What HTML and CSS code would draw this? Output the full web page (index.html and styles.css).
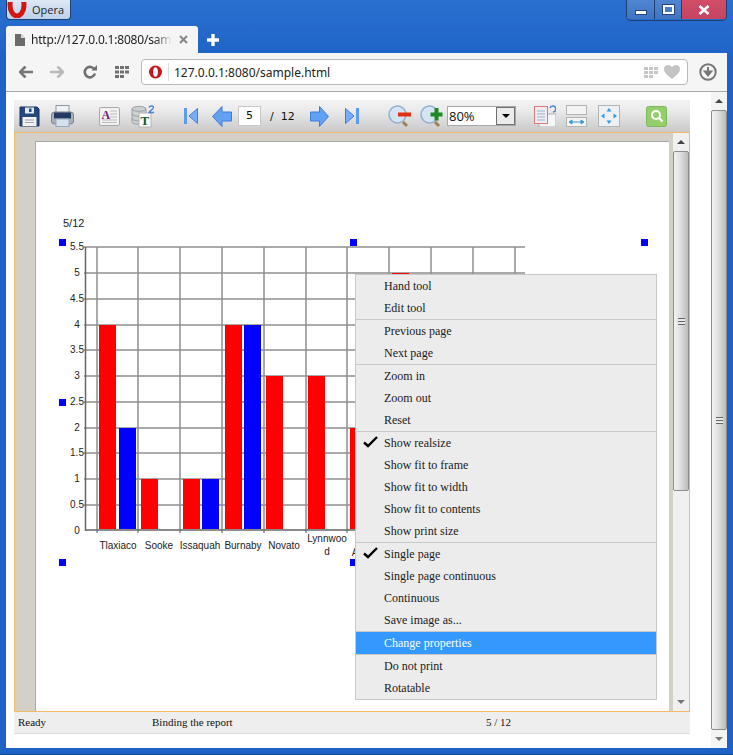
FILE: index.html
```html
<!DOCTYPE html>
<html lang="en">
<head>
	<meta charset="UTF-8">
	<title>Opera</title>
	<link rel="stylesheet" href="styles.css">
</head>
<body>
<div class="window">
	<!-- title bar -->
	<div class="titlebar">
		<div class="opera_btn">
			<svg class="opera_logo" width="20" height="16" viewBox="0 0 20 16"><ellipse cx="10" cy="3" rx="7" ry="11" fill="none" stroke="#d3170f" stroke-width="5"/></svg>
			<span>Opera</span>
		</div>
		<div class="win_controls">
			<div class="win_btn win_min"><i></i></div>
			<div class="win_btn win_max"><i></i></div>
			<div class="win_btn win_close">
				<svg width="12" height="10" viewBox="0 0 12 10"><path d="M1.5 1 L10.5 9 M10.5 1 L1.5 9" stroke="#fff" stroke-width="2.6"/></svg>
			</div>
		</div>
	</div>

	<!-- tabs -->
	<div class="tabstrip">
		<div class="tab">
			<svg width="10" height="12" viewBox="0 0 10 12"><path d="M0 0 H6 L10 4 V12 H0 Z" fill="#6b6b6b"/><path d="M6 0 V4 H10" fill="#ddd"/></svg>
			<span class="tab_title">http://127.0.0.1:8080/samp</span>
			<svg class="tab_close" width="9" height="9" viewBox="0 0 9 9"><path d="M1 1 L8 8 M8 1 L1 8" stroke="#8a8a8a" stroke-width="2.2"/></svg>
		</div>
		<svg class="new_tab" width="12" height="12" viewBox="0 0 12 12"><path d="M6 0 V12 M0 6 H12" stroke="#fff" stroke-width="3.4"/></svg>
	</div>

	<!-- browser toolbar -->
	<div class="navbar">
		<svg class="nav_back" width="14" height="12" viewBox="0 0 14 12"><path d="M6.5 0.5 L1 6 L6.5 11.5 M1 6 H14" fill="none" stroke="#767676" stroke-width="2.6"/></svg>
		<svg class="nav_fwd" width="14" height="12" viewBox="0 0 14 12"><path d="M7.5 0.5 L13 6 L7.5 11.5 M13 6 H0" fill="none" stroke="#b9b9b9" stroke-width="2.6"/></svg>
		<svg class="nav_reload" width="14" height="14" viewBox="0 0 14 14"><path d="M11.5 4.5 A5.2 5.2 0 1 0 12 8.5" fill="none" stroke="#707070" stroke-width="2.6"/><path d="M8.5 5.5 H14 V0 Z" fill="#707070"/></svg>
		<svg class="nav_grid" width="14" height="12" viewBox="0 0 14 12" fill="#707070"><path d="M0 0h4v3H0zM5 0h4v3H5zM10 0h4v3h-4zM0 4.500h4v3H0zM5 4.500h4v3H5zM10 4.500h4v3h-4zM0 9h4v3H0zM5 9h4v3H5z"/></svg>
		<div class="address">
			<svg class="addr_logo" width="13" height="14" viewBox="0 0 13 14"><circle cx="6.500" cy="7" r="6.500" fill="#c8141a"/><ellipse cx="6.500" cy="7" rx="2.400" ry="4.800" fill="#fff"/></svg>
			<span class="addr_sep"></span>
			<span class="addr_text">127.0.0.1:8080/sample.html</span>
			<svg class="addr_grid" width="14" height="11" viewBox="0 0 14 11" fill="#c6c6c6"><path d="M0 0h4v3H0zM5 0h4v3H5zM10 0h4v3h-4zM0 4h4v3H0zM5 4h4v3H5zM10 4h4v3h-4zM0 8h4v3H0zM5 8h4v3H5z"/></svg>
			<svg class="addr_heart" width="16" height="14" viewBox="0 0 16 14"><path d="M8 14 C3 10 0 7.500 0 4 C0 1.500 2 0 4 0 C6 0 7.300 1 8 2.300 C8.700 1 10 0 12 0 C14 0 16 1.500 16 4 C16 7.500 13 10 8 14 Z" fill="#c4c4c4"/></svg>
		</div>
		<svg class="nav_download" width="18" height="18" viewBox="0 0 18 18"><circle cx="9" cy="9" r="7.700" fill="none" stroke="#777" stroke-width="2"/><path d="M9 4 V11 M5.800 8.500 L9 12.500 L12.200 8.500 Z" fill="#777" stroke="#777" stroke-width="2"/></svg>
	</div>

	<div class="content">
		<div class="main">
			<div class="viewer">
				<!-- report viewer toolbar -->
				<div class="toolbar">
					<svg class="ic_save" width="21" height="21" viewBox="0 0 21 21"><path d="M1 1 H18 L20 3 V20 H1 Z" fill="#24477c" stroke="#16305a"/><rect x="6" y="1.500" width="9" height="6" fill="#dfe8f3"/><rect x="10" y="2.500" width="2.500" height="3.500" fill="#24477c"/><rect x="3.500" y="11" width="14" height="9" fill="#f2f2f2"/><path d="M6 14 H15 M6 16.500 H15" stroke="#9aa3ad"/></svg>
					<svg class="ic_print" width="23" height="22" viewBox="0 0 23 22"><rect x="5" y="0.500" width="13" height="8" fill="#eef2f6" stroke="#8e98a4"/><rect x="0.500" y="7" width="22" height="12" rx="3" fill="#aab0b8" stroke="#7c838c"/><rect x="3" y="7.500" width="17" height="6" fill="#243a63"/><rect x="5" y="14" width="13" height="7.500" fill="#d4e2f0" stroke="#96a8ba"/></svg>
					<svg class="ic_text" width="21" height="19" viewBox="0 0 21 19"><rect x="0.500" y="0.500" width="20" height="18" rx="1.500" fill="#f4f2f0" stroke="#a8a8a8"/><path d="M11 4 H18 M11 7 H18 M11 10 H18 M3 13 H18 M3 15.500 H18" stroke="#bcbcbc"/><text class="ic_letter ic_letter_a" x="2.500" y="11.500">A</text></svg>
					<svg class="ic_db" width="24" height="23" viewBox="0 0 24 23"><path d="M1 4 C1 0.500 15 0.500 15 4 V17 C15 20 1 20 1 17 Z" fill="#ccd0d2" stroke="#9aa0a4"/><path d="M1 4 C1 7 15 7 15 4 M1 9 C1 12 15 12 15 9 M1 13.500 C1 16.500 15 16.500 15 13.500" fill="none" stroke="#9aa0a4"/><rect x="8" y="8" width="12" height="14" fill="#fbfbfb" stroke="#b4b4b4"/><text class="ic_letter ic_letter_t" x="9.500" y="19.500">T</text><path d="M18 2.500 C18.500 0.500 22.500 0.500 22.500 2.500 C22.500 4.500 18.500 5.500 18 7.500 H23" fill="none" stroke="#4a86d8" stroke-width="1.300"/></svg>
					<svg class="ic_first" width="14" height="16" viewBox="0 0 14 16"><rect x="0" y="0" width="3" height="16" fill="#5b9bf0"/><path d="M13.500 0.500 V15.500 L5 8 Z" fill="#78aef5" stroke="#3b7ddc"/></svg>
					<svg class="ic_prev" width="20" height="21" viewBox="0 0 20 21"><path d="M10 0.500 L0.500 10.500 L10 20.500 V15 H19.500 V6 H10 Z" fill="#62a0f2" stroke="#3b7ddc"/></svg>
					<div class="page_input">5</div>
					<span class="page_total"><span class="slash">/</span>12</span>
					<svg class="ic_next" width="19" height="21" viewBox="0 0 19 21"><path d="M9.500 0.500 L18.500 10.500 L9.500 20.500 V15 H0.500 V6 H9.500 Z" fill="#62a0f2" stroke="#3b7ddc"/></svg>
					<svg class="ic_last" width="14" height="16" viewBox="0 0 14 16"><rect x="11" y="0" width="3" height="16" fill="#5b9bf0"/><path d="M0.500 0.500 V15.500 L9 8 Z" fill="#78aef5" stroke="#3b7ddc"/></svg>
					<svg class="ic_zoomout" width="24" height="23" viewBox="0 0 24 23"><circle cx="9.500" cy="9.500" r="8.500" fill="#d4e4f2" stroke="#8fb0cc" stroke-width="1.500"/><path d="M15 17 L19 21" stroke="#a08050" stroke-width="3"/><rect x="10" y="7.500" width="13" height="4" fill="#e0300f"/></svg>
					<svg class="ic_zoomin" width="23" height="23" viewBox="0 0 23 23"><circle cx="9.500" cy="9.500" r="8.500" fill="#d4e4f2" stroke="#8fb0cc" stroke-width="1.500"/><path d="M15 17 L19 21" stroke="#a08050" stroke-width="3"/><path d="M16.500 3 V15.500 M10.500 9.500 H22.500" stroke="#1f8a25" stroke-width="4"/></svg>
					<div class="zoom_select"><span class="zoom_value">80%</span><span class="zoom_arrow"><i></i></span></div>
					<svg class="ic_copy" width="22" height="22" viewBox="0 0 22 22"><rect x="5" y="9" width="17" height="13" fill="#f6f6f6" stroke="#b0b0b0"/><path d="M16 3 A3 3 0 1 1 19 7" fill="none" stroke="#4a86d8" stroke-width="1.500"/><rect x="0.500" y="1.500" width="13" height="17" fill="#f4ecec" stroke="#d97a80"/><path d="M3 6 H11 M3 9 H11 M3 12 H11 M3 15 H11" stroke="#8fb6dc"/></svg>
					<svg class="ic_width" width="21" height="22" viewBox="0 0 21 22"><rect x="0.500" y="0.500" width="20" height="9" fill="#f4f4f4" stroke="#b4b4b4"/><rect x="0.500" y="12.500" width="20" height="9" fill="#f4f4f4" stroke="#b4b4b4"/><path d="M3 17 H18 M3 17 L6 15 V19 Z M18 17 L15 15 V19 Z" fill="#3a9bdc" stroke="#3a9bdc"/></svg>
					<svg class="ic_fit" width="22" height="22" viewBox="0 0 22 22"><rect x="0.500" y="0.500" width="21" height="21" fill="#eef1f3" stroke="#b4b4b4"/><path d="M11 3 L8.500 6.500 H13.500 Z M11 19 L8.500 15.500 H13.500 Z M3 11 L6.500 8.500 V13.500 Z M19 11 L15.500 8.500 V13.500 Z" fill="#2f9be0"/></svg>
					<svg class="ic_search" width="21" height="21" viewBox="0 0 21 21"><rect x="0.500" y="0.500" width="20" height="20" rx="2" fill="#94cf6c" stroke="#7cb858"/><circle cx="10" cy="9" r="4" fill="none" stroke="#fff" stroke-width="2"/><path d="M13 12 L16.500 15.500" stroke="#fff" stroke-width="2.400"/></svg>
				</div>

				<div class="canvas">
					<div class="pane">
						<div class="page">
							<svg class="chart" width="633" height="569" viewBox="36 142 633 569">
								<text class="page_no" x="63" y="227">5/12</text>
								<g class="handles">
									<rect x="59" y="239" width="7" height="7"/><rect x="350" y="239" width="7" height="7"/><rect x="641" y="239" width="7" height="7"/>
									<rect x="59" y="399" width="7" height="7"/><rect x="59" y="559" width="7" height="7"/><rect x="350" y="559" width="7" height="7"/>
								</g>
								<g class="grid">
									<path d="M84 247H525M84 273H525M84 299H525M84 325H525M84 350H525M84 376H525M84 402H525M84 428H525M84 453H525M84 479H525M84 505H525"/>
									<path d="M97 247V533M138 247V533M180 247V533M222 247V533M264 247V533M306 247V533M347 247V533M389 247V533M431 247V533M473 247V533M515 247V533"/>
								</g>
								<path class="axis" d="M85.500 247V531M85 530H525"/>
								<g class="bars_red">
									<rect x="99" y="325" width="17" height="204"/><rect x="141" y="479" width="17" height="50"/><rect x="183" y="479" width="17" height="50"/>
									<rect x="225" y="325" width="17" height="204"/><rect x="266" y="376" width="17" height="153"/><rect x="308" y="376" width="17" height="153"/>
									<rect x="350" y="428" width="17" height="101"/><rect x="392" y="273" width="17" height="256"/>
								</g>
								<g class="bars_blue">
									<rect x="119" y="428" width="17" height="101"/><rect x="202" y="479" width="17" height="50"/><rect x="244" y="325" width="17" height="204"/>
								</g>
								<g class="y_labels">
									<text x="77" y="250">5.5</text><text x="77" y="276">5</text><text x="77" y="302">4.5</text><text x="77" y="328">4</text>
									<text x="77" y="353">3.5</text><text x="77" y="379">3</text><text x="77" y="405">2.5</text><text x="77" y="431">2</text>
									<text x="77" y="456">1.5</text><text x="77" y="482">1</text><text x="77" y="508">0.5</text><text x="77" y="534">0</text>
								</g>
								<g class="x_labels">
									<text x="118" y="549">Tlaxiaco</text><text x="159" y="549">Sooke</text><text x="200" y="549">Issaquah</text>
									<text x="243" y="549">Burnaby</text><text x="284" y="549">Novato</text>
									<text x="327" y="542">Lynnwoo</text><text x="327" y="555">d</text><text x="355" y="556">A</text>
								</g>
							</svg>
						</div>
					</div>
					<div class="scrollbar inner_sb">
						<div class="sb_arrow sb_up"></div>
						<div class="sb_thumb inner_thumb"><div class="sb_grip"></div></div>
						<div class="sb_space"></div>
						<div class="sb_arrow sb_down"></div>
					</div>

					<!-- context menu -->
					<div class="menu">
						<div class="menu_group">
							<div class="menu_item">Hand tool</div>
							<div class="menu_item">Edit tool</div>
						</div>
						<div class="menu_group">
							<div class="menu_item">Previous page</div>
							<div class="menu_item">Next page</div>
						</div>
						<div class="menu_group">
							<div class="menu_item">Zoom in</div>
							<div class="menu_item">Zoom out</div>
							<div class="menu_item">Reset</div>
						</div>
						<div class="menu_group">
							<div class="menu_item"><svg class="check" width="15" height="12" viewBox="0 0 15 12"><path d="M1 6.500 L5 10 L14 1" fill="none" stroke="#000" stroke-width="2.400"/></svg>Show realsize</div>
							<div class="menu_item">Show fit to frame</div>
							<div class="menu_item">Show fit to width</div>
							<div class="menu_item">Show fit to contents</div>
							<div class="menu_item">Show print size</div>
						</div>
						<div class="menu_group">
							<div class="menu_item"><svg class="check" width="15" height="12" viewBox="0 0 15 12"><path d="M1 6.500 L5 10 L14 1" fill="none" stroke="#000" stroke-width="2.400"/></svg>Single page</div>
							<div class="menu_item">Single page continuous</div>
							<div class="menu_item">Continuous</div>
							<div class="menu_item">Save image as...</div>
						</div>
						<div class="menu_group">
							<div class="menu_item menu_active">Change properties</div>
						</div>
						<div class="menu_group">
							<div class="menu_item">Do not print</div>
							<div class="menu_item">Rotatable</div>
						</div>
					</div>
				</div>

				<div class="statusbar">
					<span class="status_a">Ready</span>
					<span class="status_b">Binding the report</span>
					<span class="status_c">5 / 12</span>
				</div>
			</div>
		</div>
		<div class="scrollbar outer_sb">
			<div class="sb_arrow sb_up"></div>
			<div class="sb_thumb outer_thumb"><div class="sb_grip"></div></div>
			<div class="sb_arrow sb_down"></div>
		</div>
	</div>
</div>
</body>
</html>
```

FILE: styles.css
```css
html, body {
	margin: 0;
	padding: 0;
}
body {
	width: 733px;
	height: 755px;
	overflow: hidden;
	background: #1f62c4;
}
.window {
	height: 755px;
	box-sizing: border-box;
	padding: 0 6px 6px;
	display: flex;
	flex-direction: column;
	background: linear-gradient(#2a70d0, #1e62c6 60px);
	border-bottom: 1px solid #1b4a8c;
	font-family: "Noto Sans", sans-serif;
}
.titlebar {
	height: 26px;
	flex: none;
	display: flex;
	justify-content: space-between;
	align-items: flex-start;
}
.opera_btn {
	width: 65px;
	height: 20px;
	box-sizing: border-box;
	display: flex;
	align-items: center;
	gap: 5px;
	background: linear-gradient(#dfe8f5, #bcd0ea);
	border: 1px solid #1d3f72;
	border-top: none;
	border-radius: 0 0 4px 4px;
	font-family: "Open Sans", sans-serif;
	font-size: 11px;
	color: #222;
}
.win_controls {
	display: flex;
	height: 20px;
	margin-right: 0;
	border: 1px solid #1d3f72;
	border-top: none;
	border-radius: 0 0 5px 5px;
	overflow: hidden;
}
.win_btn {
	display: flex;
	align-items: center;
	justify-content: center;
	box-sizing: border-box;
	height: 19px;
	background: linear-gradient(#4f86d2, #3f74c2);
	border-right: 1px solid #1d3f72;
}
.win_min {
	width: 28px;
}
.win_min i {
	width: 10px;
	height: 3px;
	margin-top: 6px;
	background: #fff;
	border: 1px solid #24477c;
}
.win_max {
	width: 27px;
}
.win_max i {
	width: 7px;
	height: 5px;
	border: 2px solid #fff;
	outline: 1px solid #24477c;
}
.win_close {
	width: 44px;
	background: linear-gradient(#d24d68, #c44460);
	border-right: none;
}
.tabstrip {
	height: 27px;
	flex: none;
	display: flex;
	align-items: flex-end;
}
.tab {
	width: 192px;
	height: 27px;
	box-sizing: border-box;
	padding-left: 9px;
	display: flex;
	align-items: center;
	background: #f5f5f5;
	border-radius: 3px 3px 0 0;
	font-size: 12px;
	color: #222;
}
.tab_title {
	width: 141px;
	margin-left: 6px;
	letter-spacing: -0.2px;
	white-space: nowrap;
	mask-image: linear-gradient(to right, #000 88%, transparent);
}
.tab_close {
	margin-left: 7px;
}
.new_tab {
	margin: 0 0 7px 9px;
}
.navbar {
	height: 38px;
	flex: none;
	display: flex;
	align-items: center;
	background: #f5f5f5;
	border-bottom: 1px solid #a8a8a8;
	box-sizing: content-box;
}
.nav_back {
	margin-left: 13px;
}
.nav_fwd {
	margin-left: 17px;
}
.nav_reload {
	margin-left: 19px;
}
.nav_grid {
	margin-left: 18px;
}
.address {
	width: 547px;
	height: 26px;
	margin-left: 12px;
	box-sizing: border-box;
	display: flex;
	align-items: center;
	background: #fff;
	border: 1px solid #b8b8b8;
	border-radius: 4px;
	font-size: 12px;
	color: #222;
}
.addr_logo {
	margin-left: 7px;
}
.addr_sep {
	width: 1px;
	height: 18px;
	margin-left: 6px;
	background: #ddd;
}
.addr_text {
	width: 470px;
	margin-left: 5px;
}
.addr_grid {
	margin-left: 0;
}
.addr_heart {
	margin-left: 6px;
}
.nav_download {
	margin-left: 11px;
}
.content {
	flex: 1;
	display: flex;
	background: #fff;
}
.main {
	flex: 1;
	padding: 8px 0 0 8px;
}
.viewer {
	width: 676px;
}
.toolbar {
	height: 32px;
	display: flex;
	align-items: center;
	background: linear-gradient(#f2f2f2, #ececec 30%, #c9c9c9);
}
.toolbar svg {
	flex: none;
}
.ic_save { margin-left: 5px; }
.ic_print { margin-left: 11px; }
.ic_text { margin-left: 25px; }
.ic_db { margin-left: 11px; }
.ic_first { margin-left: 29px; }
.ic_prev { margin-left: 14px; }
.ic_next { margin-left: 14px; }
.ic_last { margin-left: 16px; }
.ic_zoomout { margin-left: 29px; }
.ic_zoomin { margin-left: 8px; }
.ic_copy { margin-left: 18px; }
.ic_width { margin-left: 10px; }
.ic_fit { margin-left: 11px; }
.ic_search { margin-left: 26px; }
.ic_letter {
	font-family: "Liberation Serif", serif;
	font-weight: bold;
	font-size: 12px;
}
.ic_letter_a {
	fill: #6b1f7a;
}
.ic_letter_t {
	fill: #0f5a2a;
	font-size: 13px;
}
.page_input {
	width: 23px;
	height: 20px;
	margin-left: 6px;
	box-sizing: border-box;
	background: #fff;
	border: 1px solid #c8c8c8;
	font-family: "DejaVu Sans", sans-serif;
	font-size: 11px;
	line-height: 18px;
	text-align: center;
	color: #111;
}
.page_total {
	width: 26px;
	margin-left: 9px;
	font-family: "DejaVu Sans", sans-serif;
	font-size: 11px;
	color: #111;
}
.slash {
	margin-right: 7px;
}
.zoom_select {
	width: 69px;
	height: 20px;
	margin-left: 4px;
	box-sizing: border-box;
	display: flex;
	background: #fff;
	border: 1px solid #a8a8a8;
	font-family: "Open Sans", sans-serif;
	font-size: 13px;
	line-height: 18px;
	color: #111;
}
.zoom_value {
	flex: 1;
	padding-left: 1px;
}
.zoom_arrow {
	width: 17px;
	display: flex;
	align-items: center;
	justify-content: center;
	background: #ececec;
	border: 1px solid #707070;
}
.zoom_arrow i {
	border: 4px solid transparent;
	border-top: 4px solid #000;
	border-bottom: none;
}
.canvas {
	position: relative;
	height: 578px;
	display: flex;
	border: 1px solid #f0bc68;
}
.pane {
	flex: 1;
	padding: 8px 4px 0 20px;
	background: #d4d0c8;
	overflow: hidden;
}
.page {
	height: 100%;
	background: #fff;
	border-top: 1px solid #a8a8a8;
	border-left: 1px solid #a8a8a8;
}
.chart {
	display: block;
	font-family: "Liberation Sans", sans-serif;
	font-size: 10px;
	fill: #222;
}
.page_no {
	font-size: 11px;
}
.handles rect {
	fill: #0000ff;
}
.grid path {
	fill: none;
	stroke: #8f8f8f;
	stroke-width: 1.500;
}
.axis {
	fill: none;
	stroke: #666;
	stroke-width: 1.500;
}
.bars_red rect {
	fill: #ff0000;
}
.bars_blue rect {
	fill: #0000ff;
}
.y_labels text {
	text-anchor: middle;
}
.x_labels text {
	text-anchor: middle;
}
.scrollbar {
	width: 16px;
	flex: none;
	display: flex;
	flex-direction: column;
	background: #f4f4f4;
}
.inner_sb {
	background: #f0f0f0;
}
.sb_arrow {
	height: 18px;
	flex: none;
	display: flex;
	align-items: center;
	justify-content: center;
}
.sb_arrow::before {
	content: "";
	border: 4px solid transparent;
}
.sb_up::before {
	border-top: none;
	border-bottom: 4px solid #444;
}
.sb_down::before {
	border-bottom: none;
	border-top: 4px solid #777;
}
.sb_thumb {
	box-sizing: border-box;
	display: flex;
	align-items: center;
	justify-content: center;
	background: linear-gradient(to right, #f2f2f2, #e2e2e2 40%, #bcbcbc);
	border: 1px solid #8c8c8c;
	border-radius: 2px;
}
.inner_thumb {
	height: 340px;
}
.outer_thumb {
	flex: 1;
}
.sb_space {
	flex: 1;
}
.sb_grip {
	width: 7px;
	height: 7px;
	background: repeating-linear-gradient(#666 0, #666 1px, #e8e8e8 1px, #e8e8e8 3px);
}
.menu {
	position: absolute;
	left: 340px;
	top: 141px;
	width: 302px;
	box-sizing: border-box;
	background: #ececec;
	border: 1px solid #c8c8c8;
	font-family: "Liberation Serif", serif;
	font-size: 12px;
	color: #1a1a1a;
}
.menu_group {
	border-bottom: 1px solid #c8c8c8;
}
.menu_group:last-child {
	border-bottom: none;
}
.menu_item {
	position: relative;
	height: 22px;
	padding-left: 28px;
	line-height: 22px;
}
.menu_active {
	background: #3399ff;
	color: #fff;
}
.check {
	position: absolute;
	left: 7px;
	top: 4px;
}
.statusbar {
	height: 21px;
	display: flex;
	background: #eeeeee;
	border-bottom: 1px solid #dcdcdc;
	box-sizing: content-box;
	font-family: "Liberation Serif", serif;
	font-size: 11px;
	line-height: 21px;
	color: #111;
}
.status_a {
	width: 134px;
	padding-left: 4px;
}
.status_b {
	width: 334px;
}
```
